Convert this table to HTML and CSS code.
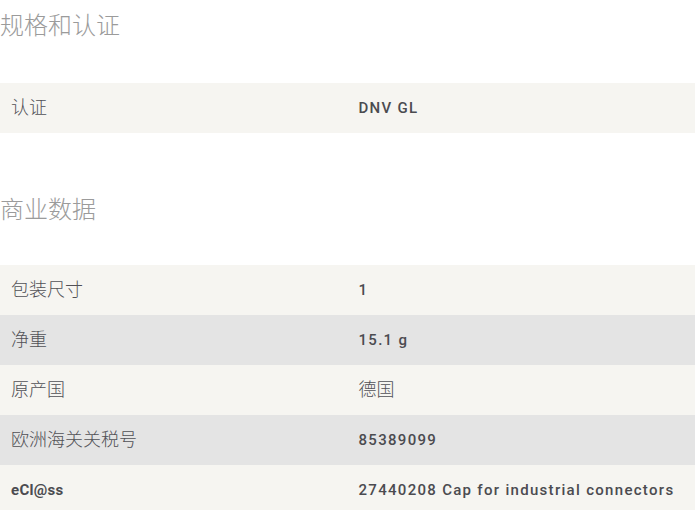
FILE: index.html
```html
<!DOCTYPE html>
<html lang="zh">
<head>
<meta charset="utf-8">
<link rel="stylesheet" href="styles.css">
</head>
<body>
<section class="spec first">
  <h2 class="spec-title">规格和认证</h2>
  <div class="spec-table">
    <div class="row light"><div class="cell label">认证</div><div class="cell value">DNV GL</div></div>
  </div>
</section>
<section class="spec second">
  <h2 class="spec-title">商业数据</h2>
  <div class="spec-table">
    <div class="row light"><div class="cell label">包装尺寸</div><div class="cell value">1</div></div>
    <div class="row dark"><div class="cell label">净重</div><div class="cell value">15.1 g</div></div>
    <div class="row light"><div class="cell label">原产国</div><div class="cell value cjk">德国</div></div>
    <div class="row dark"><div class="cell label">欧洲海关关税号</div><div class="cell value">85389099</div></div>
    <div class="row light"><div class="cell label latin">eCl@ss</div><div class="cell value">27440208 Cap for industrial connectors</div></div>
  </div>
</section>
</body>
</html>
```
FILE: styles.css
```css
html, body {
  margin: 0;
  padding: 0;
  background: #ffffff;
}
body {
  width: 695px;
  font-family: "Roboto", "Noto Sans CJK SC", sans-serif;
  color: #4b4b50;
}
.spec-title {
  margin: 0;
  font-family: "Noto Sans CJK SC", sans-serif;
  font-weight: 300;
  font-size: 24px;
  line-height: 30px;
  color: #9b9b9b;
}
.first .spec-title {
  margin-top: 9px;
  margin-bottom: 44px;
}
.second {
  margin-top: 60px;
}
.second .spec-title {
  margin-bottom: 42px;
}
.spec-table {
  display: flex;
  flex-direction: column;
}
.row {
  display: grid;
  grid-template-columns: 1fr 1fr;
  height: 50px;
  align-items: center;
}
.row.light { background: #f6f5f1; }
.row.dark { background: #e4e4e4; }
.cell {
  padding: 0 11px;
}
.label {
  font-family: "Noto Sans CJK SC", sans-serif;
  font-weight: 300;
  font-size: 18px;
  line-height: 24px;
  color: #515156;
  padding-bottom: 4px;
}
.label.latin {
  font-family: "Roboto", sans-serif;
  font-weight: 700;
  font-size: 15px;
  letter-spacing: 0.3px;
  padding-bottom: 0;
  color: #4b4b50;
}
.value {
  font-family: "Roboto", "Noto Sans CJK SC", sans-serif;
  font-weight: 500;
  font-size: 15px;
  letter-spacing: 1.3px;
}
.value.cjk {
  font-family: "Noto Sans CJK SC", sans-serif;
  font-weight: 300;
  font-size: 18px;
  line-height: 24px;
  letter-spacing: 0;
  padding-bottom: 4px;
  color: #515156;
}
```
